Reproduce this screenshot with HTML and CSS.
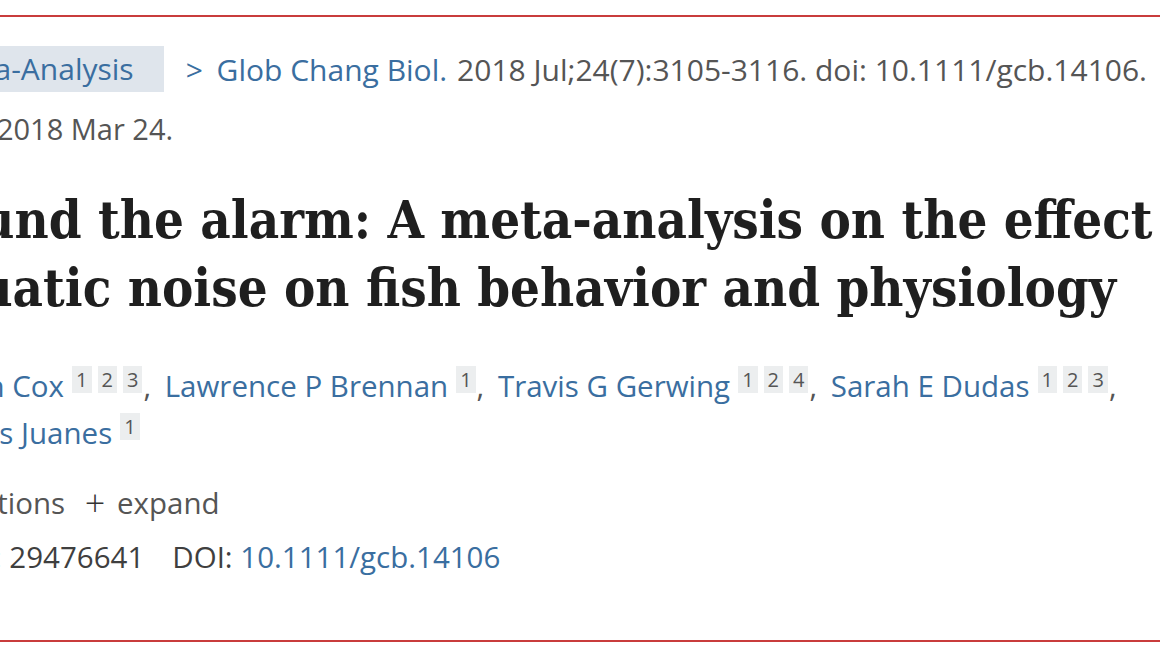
FILE: index.html
```html
<!DOCTYPE html>
<html>
<head>
<meta charset="utf-8">
<link rel="stylesheet" href="styles.css">
</head>
<body>
<div class="frame">
  <div class="article">
    <div class="cite-row">
      <span class="pub-type">Meta-Analysis</span>
      <span class="journal"><span class="chev">&gt;</span> Glob Chang Biol.</span>
      <span class="cit">2018 Jul;24(7):3105-3116. doi: 10.1111/gcb.14106.</span>
    </div>
    <div class="epub">Epub 2018 Mar 24.</div>
    <h1 class="title">Sound the alarm: A meta-analysis on the effect of aquatic noise on fish behavior and physiology</h1>
    <div class="authors">
      <span class="author"><a>Kieran Cox</a><span class="sups"><sup>1</sup><sup>2</sup><sup>3</sup></span><span class="comma">,</span></span>
      <span class="author"><a>Lawrence P Brennan</a><span class="sups"><sup>1</sup></span><span class="comma">,</span></span>
      <span class="author"><a>Travis G Gerwing</a><span class="sups"><sup>1</sup><sup>2</sup><sup>4</sup></span><span class="comma">,</span></span>
      <span class="author"><a>Sarah E Dudas</a><span class="sups"><sup>1</sup><sup>2</sup><sup>3</sup></span><span class="comma">,</span></span>
      <span class="author"><a>Francis Juanes</a><span class="sups"><sup>1</sup></span></span>
    </div>
    <div class="affil">Affiliations <span class="expand"><span class="plus">+</span> expand</span></div>
    <div class="ids"><span class="pmid">PMID: 29476641</span><span class="doi">DOI: <a>10.1111/gcb.14106</a></span></div>
  </div>
</div>
</body>
</html>
```
FILE: styles.css
```css
html, body {
  margin: 0;
  padding: 0;
  background: #ffffff;
}
body {
  width: 1160px;
  height: 665px;
  overflow: hidden;
  padding-top: 15px;
  box-sizing: border-box;
}
.frame {
  border-top: 2px solid #c93c3c;
  border-bottom: 2px solid #c93c3c;
  height: 627px;
  box-sizing: border-box;
  overflow: hidden;
}
.article {
  margin-left: -80px;
  width: 1320px;
  font-family: "Open Sans", "Noto Sans", sans-serif;
  font-size: 29.5px;
  color: #555555;
  padding-top: 29px;
}
.cite-row {
  display: flex;
  align-items: center;
  white-space: nowrap;
  height: 46px;
  font-size: 30px;
}
.pub-type {
  background: #dfe5ec;
  color: #3a6ea0;
  padding: 0 30px 0 20px;
  height: 46px;
  line-height: 46px;
  margin-right: 22px;
}
.journal {
  color: #3a6ea0;
  margin-right: 10px;
}
.chev {
  margin-right: 6px;
}
.cit {
  color: #555555;
}
.epub {
  margin-top: 19px;
  line-height: 36px;
  font-size: 29px;
}
.title {
  font-family: "DejaVu Serif", serif;
  font-weight: 700;
  font-stretch: condensed;
  font-size: 52.3px;
  line-height: 68px;
  color: #1f1f1f;
  margin: 39px 0 0 -5px;
  width: 1420px;
}
.authors {
  margin: 40px 0 0 -4px;
  line-height: 47px;
  width: 1270px;
  color: #3a6ea0;
}
.author a {
  color: #3a6ea0;
}
.sups {
  margin-left: 8px;
}
.sups sup {
  display: inline-block;
  background: #eceeef;
  color: #555;
  font-size: 20px;
  line-height: 27px;
  padding: 0 4px;
  margin-right: 6px;
  vertical-align: 10px;
}
.comma {
  color: #555;
  margin-right: 6px;
  margin-left: -5px;
}
.affil {
  margin-top: 27px;
  line-height: 40px;
}
.expand {
  margin-left: 12px;
}
.plus {
  color: #333;
  font-size: 36px;
  line-height: 30px;
  font-weight: 300;
  margin-right: 4px;
  vertical-align: -2px;
}
.ids {
  margin-top: 14px;
  line-height: 40px;
  color: #3f3f3f;
}
.pmid {
  margin-right: 28px;
}
.doi a {
  color: #3a6ea0;
}
```
